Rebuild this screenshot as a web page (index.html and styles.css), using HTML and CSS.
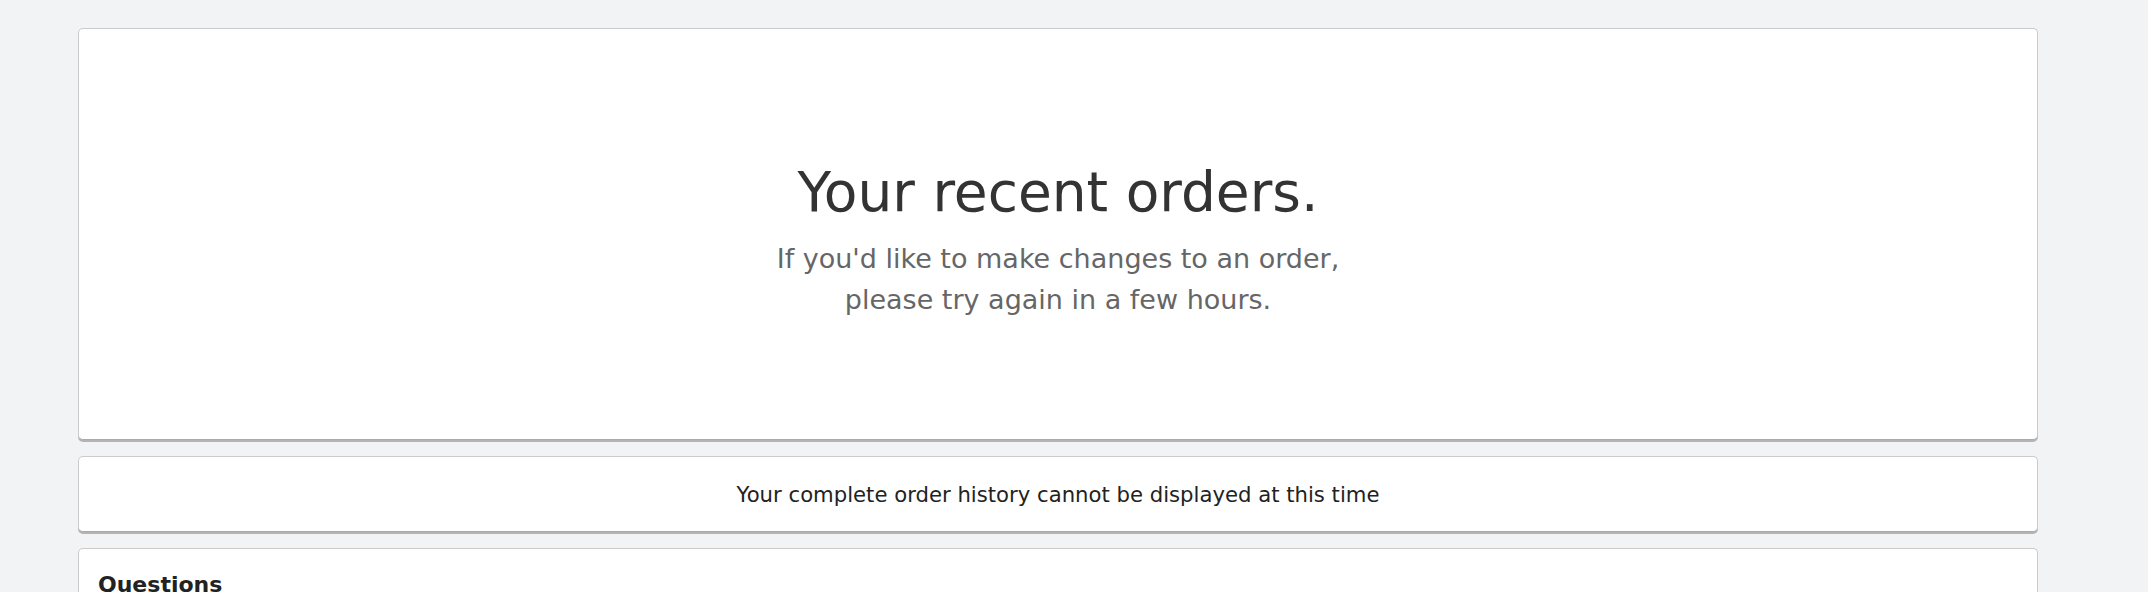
FILE: index.html
```html
<!DOCTYPE html>
<html>
<head>
    <meta charset="UTF-8" name="viewport" content="width=device-width, initial-scale=1.0"/>
    <title>Your Orders</title>
    <link rel="stylesheet" href="styles.css">
</head>
<body>
    <main class="orders">
        <section class="card hero">
            <h1 class="hero-title">Your recent orders.</h1>
            <p class="hero-sub">If you'd like to make changes to an order,<br>please try again in a few hours.</p>
        </section>
        <section class="card notice">
            <p>Your complete order history cannot be displayed at this time</p>
        </section>
        <section class="card questions">
            <h2 class="questions-title">Questions</h2>
        </section>
    </main>
</body>
</html>
```

FILE: styles.css
```css
html, body {
    margin: 0;
    height: 100%;
    overflow: hidden;
}
body {
    background: #f2f3f5;
    font-family: "DejaVu Sans", "Open Sans", sans-serif;
    color: #222;
}
.orders {
    display: flex;
    flex-direction: column;
    gap: 16px;
    padding: 28px 110px 0 78px;
}
.card {
    background: #fff;
    border: 1px solid #cbcbcb;
    border-bottom-color: #aaa;
    border-radius: 5px;
    box-shadow: 0 2px 0 #b4b4b4;
}
.hero {
    display: flex;
    flex-direction: column;
    align-items: center;
    text-align: center;
    padding: 131px 0 119px;
}
.hero-title {
    margin: 0 0 14px;
    font-size: 55px;
    line-height: 64px;
    font-weight: normal;
    color: #333;
}
.hero-sub {
    margin: 0;
    font-size: 27px;
    line-height: 41px;
    color: #666;
}
.notice {
    text-align: center;
    padding: 25px 0 23px;
}
.notice p {
    margin: 0;
    font-size: 21.2px;
    line-height: 26px;
    color: #222;
}
.questions {
    padding: 22px 19px 60px;
}
.questions-title {
    margin: 0;
    font-size: 22px;
    line-height: 28px;
    font-weight: bold;
    color: #222;
}
```
